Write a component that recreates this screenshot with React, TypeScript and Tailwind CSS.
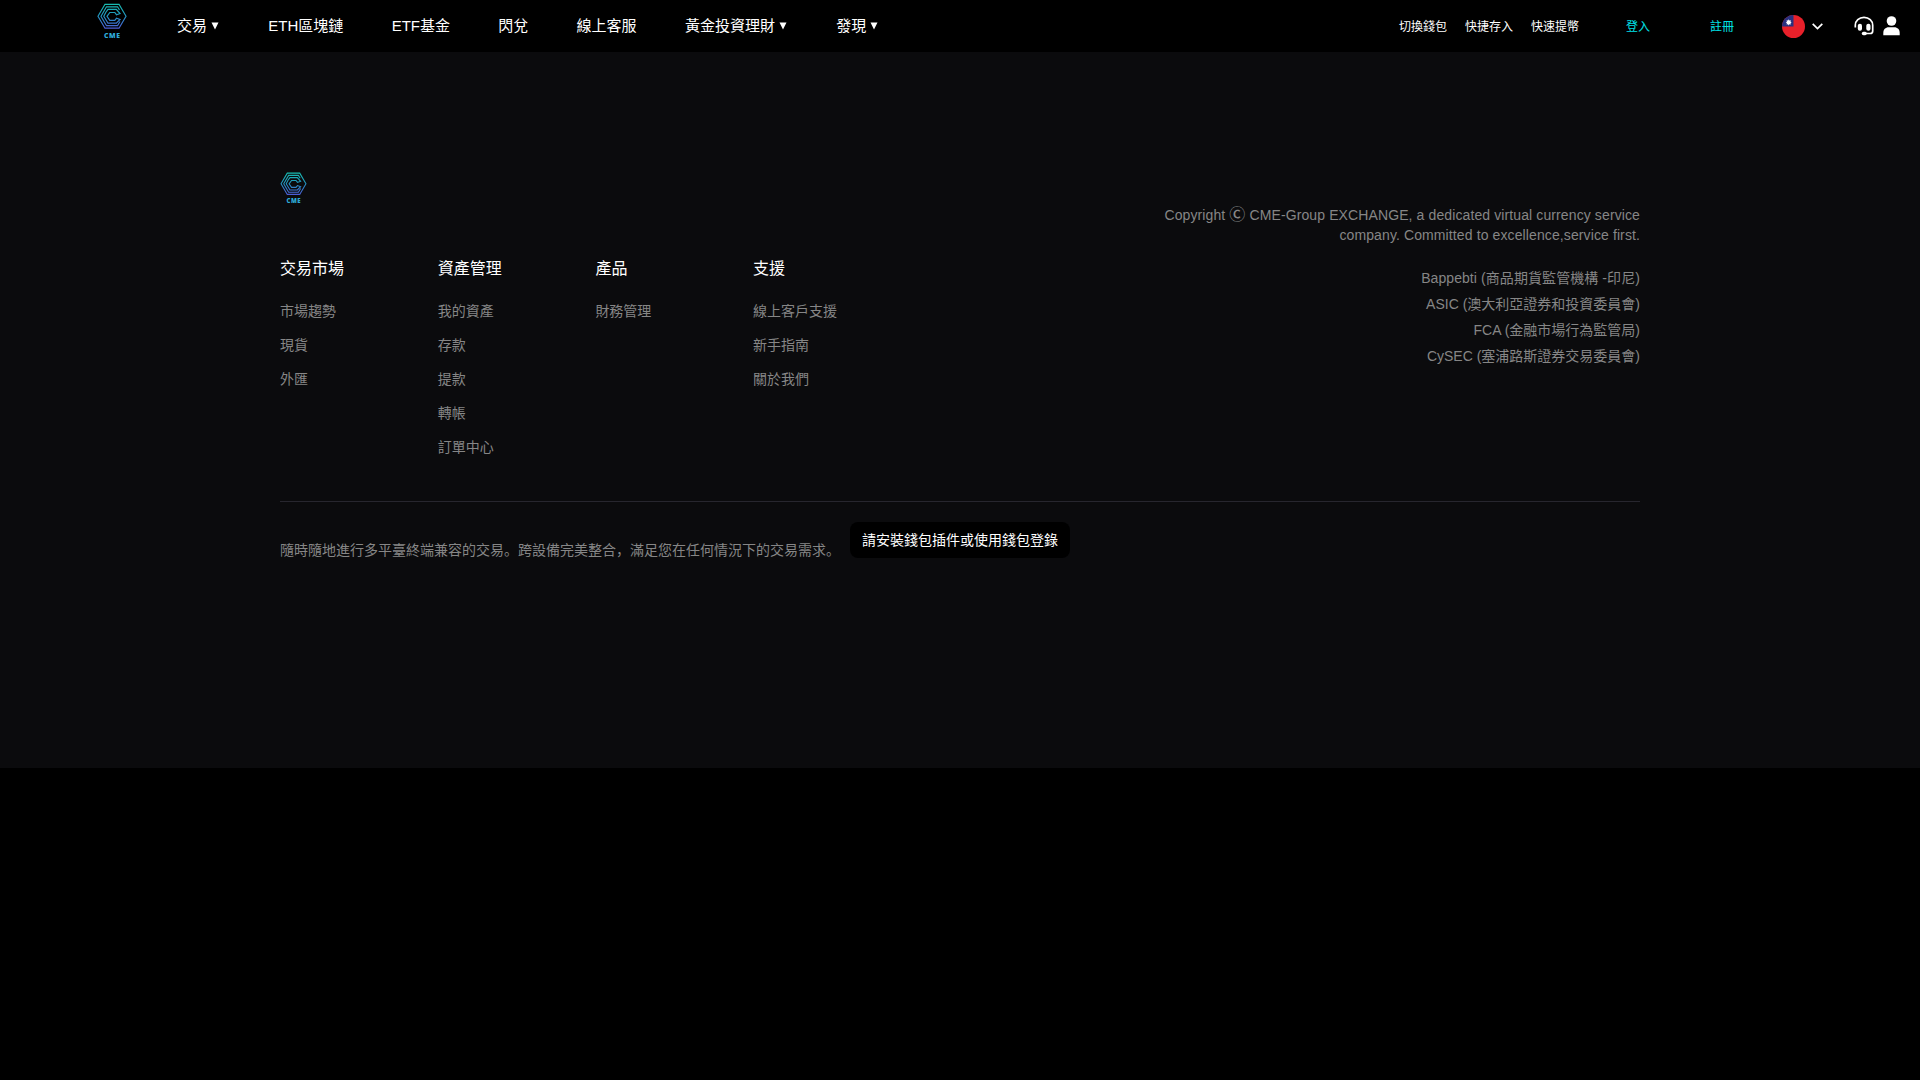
import { ReactNode } from 'react';

type FooterColumn = {
  title: string;
  links: string[];
};

const navItems = [
  { label: '交易', dropdown: true },
  { label: 'ETH區塊鏈' },
  { label: 'ETF基金' },
  { label: '閃兌' },
  { label: '線上客服' },
  { label: '黃金投資理財', dropdown: true },
  { label: '發現', dropdown: true },
];

const quickLinks = ['切換錢包', '快捷存入', '快速提幣'];

const footerColumns: FooterColumn[] = [
  { title: '交易市場', links: ['市場趨勢', '現貨', '外匯'] },
  { title: '資產管理', links: ['我的資產', '存款', '提款', '轉帳', '訂單中心'] },
  { title: '產品', links: ['財務管理'] },
  { title: '支援', links: ['線上客戶支援', '新手指南', '關於我們'] },
];

const regulators = [
  'Bappebti (商品期貨監管機構 -印尼)',
  'ASIC (澳大利亞證券和投資委員會)',
  'FCA (金融市場行為監管局)',
  'CySEC (塞浦路斯證券交易委員會)',
];

function Logo({ id, className }: { id: string; className: string }) {
  return (
    <svg viewBox="0 0 30 36" className={className} fill="none">
      <defs>
        <linearGradient id={id} x1="0" y1="0" x2="0" y2="26" gradientUnits="userSpaceOnUse">
          <stop offset="0" stopColor="#16c0ae" />
          <stop offset="0.5" stopColor="#2394c0" />
          <stop offset="1" stopColor="#4f5ad8" />
        </linearGradient>
      </defs>
      <g stroke={`url(#${id})`} strokeWidth="1.2">
        <path d="M8 1.300h14l7 12L22 25.200H8L1 13.300z" />
        <path d="M22.500 7l-2-3.200H9.500L4 13.300l5.500 9.400h11l2.500-4.200" />
        <path d="M9 9l2-2.700h8.300l3.700 4.200-3.500 1.200-1.700-2.200h-5L10 13.300l2.800 4h5l1.700-2 3.500 1.200-3.700 3.700h-8.300L6.800 13.300z" />
      </g>
      <text
        x="15.300"
        y="34.700"
        textAnchor="middle"
        fontSize="6.800"
        letterSpacing="0.600"
        fontWeight="800"
        fontFamily="Open Sans, sans-serif"
        fill="#2eaad8"
      >
        CME
      </text>
    </svg>
  );
}

function TaiwanFlag() {
  return (
    <svg viewBox="0 0 24 24" className="w-[23px] h-[23px]">
      <circle cx="12" cy="12" r="12" fill="#e8202a" />
      <path d="M12 0v12H0A12 12 0 0 1 12 0z" fill="#29317f" />
      <path
        d="M7 4.500l.7 1.300 1.500-.3-.3 1.500 1.200.7-1.200.7.300 1.500-1.500-.3L7 10.900l-.7-1.300-1.500.3.300-1.500-1.200-.7 1.200-.7-.3-1.500 1.500.3z"
        fill="#fff"
      />
    </svg>
  );
}

function HeadsetIcon() {
  return (
    <svg viewBox="0 0 20 20" className="w-[20px] h-[20px]" fill="none">
      <path
        d="M1.300 11.500V9.200C1.300 4.800 5 1.300 10 1.300s8.700 3.500 8.700 7.900v5.800c0 1.700-1 2.500-2.500 2.500H11"
        stroke="#fff"
        strokeWidth="1.700"
      />
      <rect x="3.800" y="7.800" width="4.200" height="7" rx="2" fill="#fff" />
      <rect x="12.300" y="7.800" width="4.200" height="7" rx="2" fill="#fff" />
      <rect x="7.800" y="15.800" width="5" height="3.400" rx="1.700" fill="#fff" />
    </svg>
  );
}

function UserIcon() {
  return (
    <svg viewBox="0 0 17 20" className="w-[17px] h-[20px]" fill="#fff">
      <circle cx="8.500" cy="5" r="4.800" />
      <path d="M0.300 19.300v-2.300c0-3.500 2.200-5.700 5.400-5.700h5.600c3.200 0 5.400 2.200 5.400 5.700v2.300z" />
    </svg>
  );
}

function NavLink({ children, dropdown }: { children: ReactNode; dropdown?: boolean }) {
  return (
    <a className="flex items-center gap-1 text-[15px] leading-[22px] whitespace-nowrap cursor-pointer">
      <span>{children}</span>
      {dropdown && (
        <svg viewBox="0 0 8 8" className="w-2 h-2 mr-px" fill="#fff">
          <path d="M0.500 0.500h7L4 7.500z" />
        </svg>
      )}
    </a>
  );
}

function Header() {
  return (
    <header className="flex h-[52px] justify-between bg-black text-white">
      <div className="flex items-center pl-[97px]">
        <Logo id="logo-header" className="w-[30px] h-[36px] mb-[10px]" />
        <nav className="flex items-center gap-[48.300px] pl-[50px]">
          {navItems.map((item) => (
            <NavLink key={item.label} dropdown={item.dropdown}>{item.label}</NavLink>
          ))}
        </nav>
      </div>
      <div className="flex items-center pr-5 text-xs">
        <div className="flex gap-[18px] pt-px">
          {quickLinks.map((link) => (
            <a key={link} className="cursor-pointer">{link}</a>
          ))}
        </div>
        <a className="ml-[47px] pt-px text-[#00e1e6] cursor-pointer">登入</a>
        <a className="ml-[60px] pt-px text-[#00e1e6] cursor-pointer">註冊</a>
        <div className="ml-12 flex items-center gap-[7px]">
          <TaiwanFlag />
          <svg viewBox="0 0 11 7" className="w-[11px] h-[7px]" fill="none">
            <path d="M0.700 0.800L5.500 5.600l4.800-4.800" stroke="#fff" strokeWidth="1.700" />
          </svg>
        </div>
        <div className="ml-[31px] flex items-center gap-[9px]">
          <HeadsetIcon />
          <UserIcon />
        </div>
      </div>
    </header>
  );
}

function Footer() {
  return (
    <footer className="h-[716px] bg-[#0b0b0d] pt-[120px] text-sm text-[#868686]">
      <div className="mx-auto w-[1360px]">
        <div className="flex h-[330px] justify-between border-b border-[#27262e]">
          <div>
            <Logo id="logo-footer" className="w-[27px] h-[32px]" />
            <div className="flex pt-[53px]">
              {footerColumns.map((column) => (
                <div key={column.title} className="w-[157.700px]">
                  <h3 className="text-base leading-6 text-white">{column.title}</h3>
                  <ul className="pt-[13px]">
                    {column.links.map((link) => (
                      <li key={link} className="h-[34px] leading-[34px] cursor-pointer">{link}</li>
                    ))}
                  </ul>
                </div>
              ))}
            </div>
          </div>
          <div className="w-[500px] pt-[33px] text-right">
            <p className="tracking-[0.110px]">
              Copyright <span className="text-base leading-none font-medium">Ⓒ</span> CME-Group EXCHANGE, a dedicated virtual
              currency service company. Committed to excellence,service first.
            </p>
            <div className="pt-5">
              {regulators.map((name) => (
                <p key={name} className="h-[26px] leading-[26px] first:tracking-[0.080px]">{name}</p>
              ))}
            </div>
          </div>
        </div>
        <div className="flex items-start pt-5">
          <p className="pt-[18px]">隨時隨地進行多平臺終端兼容的交易。跨設備完美整合，滿足您在任何情況下的交易需求。</p>
          <button className="ml-[10px] h-9 w-[220px] rounded-lg bg-black text-white">請安裝錢包插件或使用錢包登錄</button>
        </div>
      </div>
    </footer>
  );
}

export default function App() {
  return (
    <div className="min-h-screen bg-black font-['Liberation_Sans','Noto_Sans_CJK_SC',sans-serif]">
      <Header />
      <Footer />
    </div>
  );
}
